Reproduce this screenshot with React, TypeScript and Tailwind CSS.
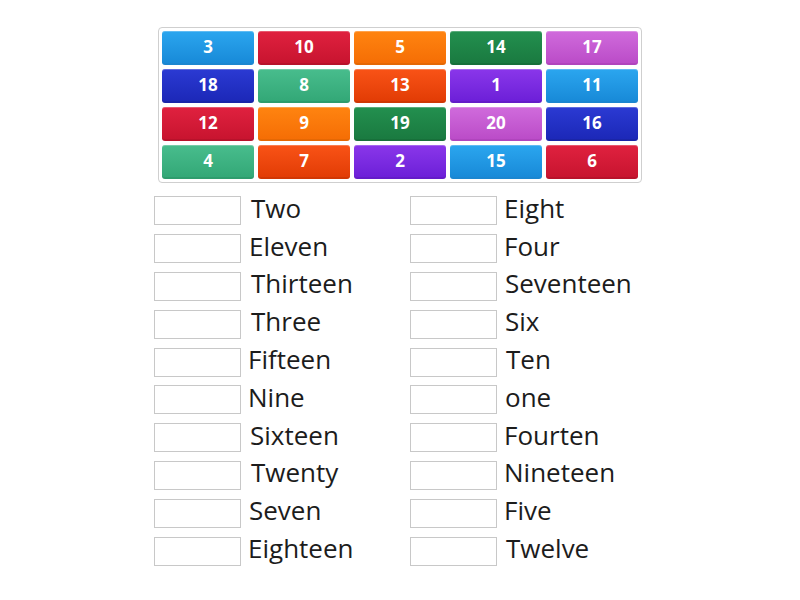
const tileColors: Record<string, string> = {
  blue: "bg-gradient-to-b from-[#2ba6ef] to-[#188ad8] border-[#1b86d0]",
  red: "bg-gradient-to-b from-[#e0213f] to-[#c8142f] border-[#b8122b]",
  orange: "bg-gradient-to-b from-[#ff8410] to-[#f56e05] border-[#e56804]",
  dgreen: "bg-gradient-to-b from-[#23904f] to-[#1a7a40] border-[#17703a]",
  pink: "bg-gradient-to-b from-[#d06bdc] to-[#bb4cc8] border-[#b045bd]",
  dblue: "bg-gradient-to-b from-[#2b3ad3] to-[#1c28b8] border-[#1a25a8]",
  mint: "bg-gradient-to-b from-[#48bd8d] to-[#33a877] border-[#2e9c6d]",
  ored: "bg-gradient-to-b from-[#f95316] to-[#e23c05] border-[#d03704]",
  purple: "bg-gradient-to-b from-[#8a36ea] to-[#6d1fd8] border-[#641cc8]",
};

const tiles: [string, string][] = [
  ["3", "blue"], ["10", "red"], ["5", "orange"], ["14", "dgreen"], ["17", "pink"],
  ["18", "dblue"], ["8", "mint"], ["13", "ored"], ["1", "purple"], ["11", "blue"],
  ["12", "red"], ["9", "orange"], ["19", "dgreen"], ["20", "pink"], ["16", "dblue"],
  ["4", "mint"], ["7", "ored"], ["2", "purple"], ["15", "blue"], ["6", "red"],
];

// [word, left nudge]
const leftWords: [string, string][] = [
  ["Two", "ml-[10px]"], ["Eleven", "ml-[8px]"], ["Thirteen", "ml-[10px]"],
  ["Three", "ml-[10px]"], ["Fifteen", "ml-[7px]"], ["Nine", "ml-[7px]"],
  ["Sixteen", "ml-[9px]"], ["Twenty", "ml-[10px]"], ["Seven", "ml-[8px]"],
  ["Eighteen", "ml-[7px]"],
];

const rightWords: [string, string][] = [
  ["Eight", "ml-[7px]"], ["Four", "ml-[7px]"], ["Seventeen", "ml-[8px]"],
  ["Six", "ml-[8px]"], ["Ten", "ml-[9px]"], ["one", "ml-[8px]"],
  ["Fourten", "ml-[7px]"], ["Nineteen", "ml-[7px]"], ["Five", "ml-[7px]"],
  ["Twelve", "ml-[9px]"],
];

function WordColumn({ words }: { words: [string, string][] }) {
  return (
    <div className="flex flex-col w-[256px]">
      {words.map(([w, ml]) => (
        <div key={w} className="flex items-center h-[37.8px]">
          <div className="w-[87px] h-[29px] shrink-0 border border-[#c8c8c8] bg-white" />
          <span className={`${ml} text-[26px] leading-none text-[#1c1c1c] -mt-[6px]`}>{w}</span>
        </div>
      ))}
    </div>
  );
}

export default function App() {
  return (
    <div
      className="w-[800px] h-[600px] bg-white overflow-hidden"
      style={{ fontFamily: '"Open Sans", "Noto Sans", sans-serif' }}
    >
      <div className="pt-[27px] flex justify-center">
        <div className="border border-[#cfcfcf] rounded-[4px] p-[3px] bg-white">
          <div className="grid grid-cols-[repeat(5,92px)] gap-[4px]">
            {tiles.map(([n, c]) => (
              <div
                key={n}
                className={`${tileColors[c]} h-[34px] rounded-[3px] border-b-2 flex items-center justify-center text-white font-bold text-[17px] shadow-[inset_0_1px_0_rgba(255,255,255,0.25)]`}
              >
                {n}
              </div>
            ))}
          </div>
        </div>
      </div>

      <div className="mt-[9px] ml-[154px] flex">
        <WordColumn words={leftWords} />
        <WordColumn words={rightWords} />
      </div>
    </div>
  );
}
